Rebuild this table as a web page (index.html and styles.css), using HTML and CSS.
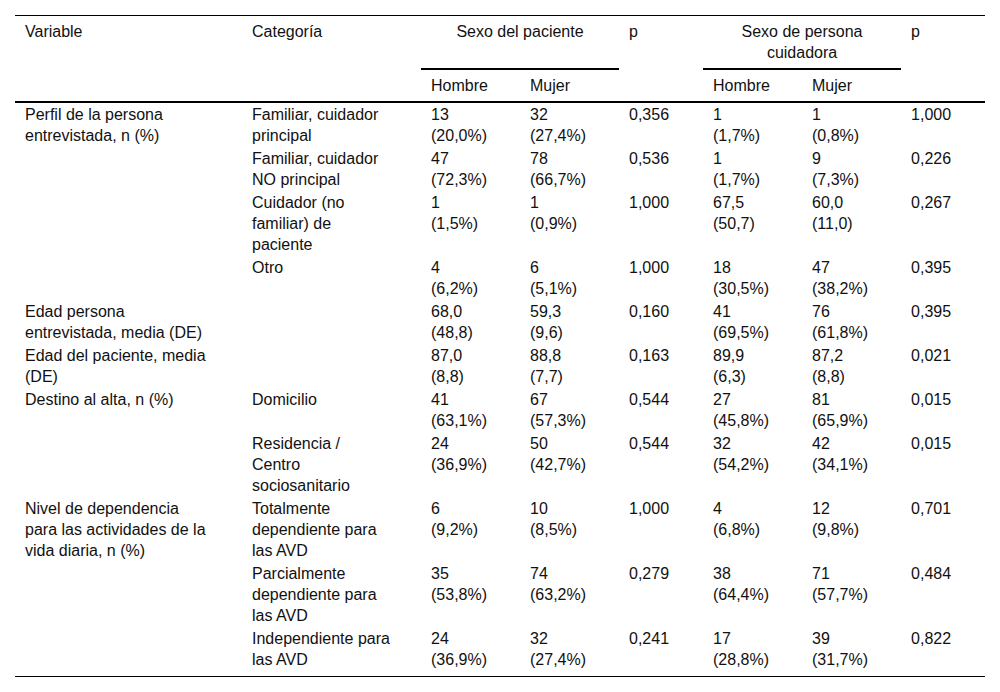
FILE: index.html
```html
<!DOCTYPE html>
<html lang="es">
<head>
<meta charset="utf-8">
<title>Tabla</title>
<link rel="stylesheet" href="styles.css">
</head>
<body>
<div class="wrap">
<table class="data">
  <colgroup>
    <col class="c-var"><col class="c-cat"><col class="c-n"><col class="c-n"><col class="c-p"><col class="c-n"><col class="c-n"><col class="c-p">
  </colgroup>
  <thead>
    <tr>
      <th rowspan="2">Variable</th>
      <th rowspan="2">Categoría</th>
      <th colspan="2" class="group">Sexo del paciente</th>
      <th rowspan="2">p</th>
      <th colspan="2" class="group">Sexo de persona cuidadora</th>
      <th rowspan="2">p</th>
    </tr>
    <tr>
      <th>Hombre</th><th>Mujer</th><th>Hombre</th><th>Mujer</th>
    </tr>
  </thead>
  <tbody>
    <tr>
      <td rowspan="4">Perfil de la persona entrevistada, n (%)</td>
      <td>Familiar, cuidador principal</td>
      <td>13 (20,0%)</td><td>32 (27,4%)</td><td>0,356</td><td>1 (1,7%)</td><td>1 (0,8%)</td><td>1,000</td>
    </tr>
    <tr>
      <td>Familiar, cuidador NO principal</td>
      <td>47 (72,3%)</td><td>78 (66,7%)</td><td>0,536</td><td>1 (1,7%)</td><td>9 (7,3%)</td><td>0,226</td>
    </tr>
    <tr>
      <td>Cuidador (no familiar) de paciente</td>
      <td>1 (1,5%)</td><td>1 (0,9%)</td><td>1,000</td><td>67,5 (50,7)</td><td>60,0 (11,0)</td><td>0,267</td>
    </tr>
    <tr>
      <td>Otro</td>
      <td>4 (6,2%)</td><td>6 (5,1%)</td><td>1,000</td><td>18 (30,5%)</td><td>47 (38,2%)</td><td>0,395</td>
    </tr>
    <tr>
      <td>Edad persona entrevistada, media (DE)</td>
      <td></td>
      <td>68,0 (48,8)</td><td>59,3 (9,6)</td><td>0,160</td><td>41 (69,5%)</td><td>76 (61,8%)</td><td>0,395</td>
    </tr>
    <tr>
      <td>Edad del paciente, media (DE)</td>
      <td></td>
      <td>87,0 (8,8)</td><td>88,8 (7,7)</td><td>0,163</td><td>89,9 (6,3)</td><td>87,2 (8,8)</td><td>0,021</td>
    </tr>
    <tr>
      <td rowspan="2">Destino al alta, n (%)</td>
      <td>Domicilio</td>
      <td>41 (63,1%)</td><td>67 (57,3%)</td><td>0,544</td><td>27 (45,8%)</td><td>81 (65,9%)</td><td>0,015</td>
    </tr>
    <tr>
      <td>Residencia / Centro sociosanitario</td>
      <td>24 (36,9%)</td><td>50 (42,7%)</td><td>0,544</td><td>32 (54,2%)</td><td>42 (34,1%)</td><td>0,015</td>
    </tr>
    <tr>
      <td rowspan="3">Nivel de dependencia para las actividades de la vida diaria, n (%)</td>
      <td>Totalmente dependiente para las AVD</td>
      <td>6 (9,2%)</td><td>10 (8,5%)</td><td>1,000</td><td>4 (6,8%)</td><td>12 (9,8%)</td><td>0,701</td>
    </tr>
    <tr>
      <td>Parcialmente dependiente para las AVD</td>
      <td>35 (53,8%)</td><td>74 (63,2%)</td><td>0,279</td><td>38 (64,4%)</td><td>71 (57,7%)</td><td>0,484</td>
    </tr>
    <tr class="last">
      <td>Independiente para las AVD</td>
      <td>24 (36,9%)</td><td>32 (27,4%)</td><td>0,241</td><td>17 (28,8%)</td><td>39 (31,7%)</td><td>0,822</td>
    </tr>
  </tbody>
</table>
</div>
</body>
</html>
```

FILE: styles.css
```css
html, body {
  margin: 0;
  padding: 0;
  background: #fff;
}

.wrap {
  padding: 15px 15px 0 15px;
}

.data {
  width: 970px;
  table-layout: fixed;
  border-collapse: collapse;
  border-top: 1px solid #000;
  border-bottom: 1px solid #000;
  font-family: "Liberation Sans", Arial, sans-serif;
  font-size: 16px;
  line-height: 21px;
  color: #111;
}

.c-var { width: 227px; }
.c-cat { width: 179px; }
.c-n { width: 99px; }
.c-p { width: 84px; }

.data th,
.data td {
  text-align: left;
  vertical-align: top;
  font-weight: normal;
  padding: 1px 30px 1px 10px;
}

.data thead th {
  padding-top: 5px;
  padding-bottom: 5px;
}

.data thead {
  border-bottom: 2px solid #000;
}

.data th.group {
  text-align: center;
  padding-left: 20px;
  padding-right: 20px;
  border-bottom: 2px solid #000;
}

.data tr.last td {
  padding-bottom: 6px;
}
```
